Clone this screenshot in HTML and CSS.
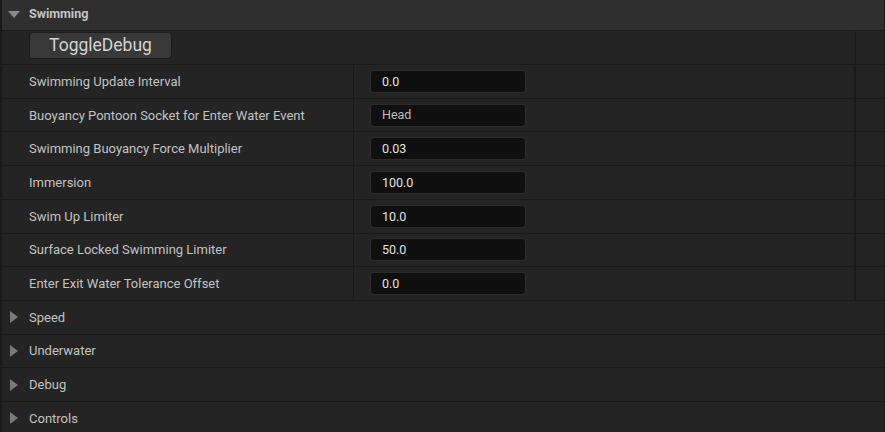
FILE: index.html
```html
<!DOCTYPE html>
<html>
<head>
<meta charset="utf-8">
<link rel="stylesheet" href="styles.css">
</head>
<body>
<div class="panel">
  <div class="cat">
    <svg class="arrow-down" width="12" height="7" viewBox="0 0 12 7"><path d="M0 0H12L6 7Z" fill="#8a8a8a"/></svg>
    <span class="cat-title">Swimming</span>
  </div>
  <div class="toggle-row">
    <div class="toggle-main"><button class="btn">ToggleDebug</button></div>
    <div class="extra"></div>
  </div>
  <div class="prop"><div class="name">Swimming Update Interval</div><div class="value"><div class="input">0.0</div></div><div class="extra"></div></div>
  <div class="prop"><div class="name">Buoyancy Pontoon Socket for Enter Water Event</div><div class="value"><div class="input muted">Head</div></div><div class="extra"></div></div>
  <div class="prop"><div class="name">Swimming Buoyancy Force Multiplier</div><div class="value"><div class="input">0.03</div></div><div class="extra"></div></div>
  <div class="prop"><div class="name">Immersion</div><div class="value"><div class="input">100.0</div></div><div class="extra"></div></div>
  <div class="prop"><div class="name">Swim Up Limiter</div><div class="value"><div class="input">10.0</div></div><div class="extra"></div></div>
  <div class="prop"><div class="name">Surface Locked Swimming Limiter</div><div class="value"><div class="input">50.0</div></div><div class="extra"></div></div>
  <div class="prop"><div class="name">Enter Exit Water Tolerance Offset</div><div class="value"><div class="input">0.0</div></div><div class="extra"></div></div>
  <div class="sub"><svg class="arrow-right" width="8" height="12" viewBox="0 0 8 12"><path d="M0 0L8 6L0 12Z" fill="#7a7a7a"/></svg><span>Speed</span></div>
  <div class="sub"><svg class="arrow-right" width="8" height="12" viewBox="0 0 8 12"><path d="M0 0L8 6L0 12Z" fill="#7a7a7a"/></svg><span>Underwater</span></div>
  <div class="sub"><svg class="arrow-right" width="8" height="12" viewBox="0 0 8 12"><path d="M0 0L8 6L0 12Z" fill="#7a7a7a"/></svg><span>Debug</span></div>
  <div class="sub"><svg class="arrow-right" width="8" height="12" viewBox="0 0 8 12"><path d="M0 0L8 6L0 12Z" fill="#7a7a7a"/></svg><span>Controls</span></div>
</div>
</body>
</html>
```
FILE: styles.css
```css
html, body {
  margin: 0;
  padding: 0;
  background: #1a1a1a;
  height: 432px;
  overflow: hidden;
  font-family: Roboto, "Liberation Sans", sans-serif;
  color: #c0c0c0;
}
.panel {
  margin: 0 1px 0 2px;
  display: flex;
  flex-direction: column;
}
.cat {
  height: 31px;
  box-sizing: border-box;
  padding-bottom: 3px;
  background: #2f2f2f;
  border-bottom: 1px solid #1a1a1a;
  display: flex;
  align-items: center;
  padding-left: 6px;
}
.arrow-down { margin-top: 1px; }
.cat-title {
  margin-left: 9px;
  font-weight: bold;
  font-size: 12.5px;
  color: #c4c4c4;
}
.toggle-row {
  height: 33px;
  border-bottom: 1px solid #1a1a1a;
  display: flex;
  background: #242424;
}
.toggle-main {
  width: 854px;
  border-right: 1px solid #1a1a1a;
  display: flex;
  align-items: flex-start;
  padding-left: 27px;
  box-sizing: border-box;
}
.btn {
  margin-top: 1px;
  width: 143px;
  height: 27px;
  background: #383838;
  border: 1px solid #1c1c1c;
  border-radius: 4px;
  color: #d4d4d4;
  font-family: Roboto, "Liberation Sans", sans-serif;
  font-size: 17.5px;
  padding: 0 0 1px 0;
}
.extra {
  flex: 1;
  background: #242424;
}
.prop {
  height: 32.71px;
  border-bottom: 1px solid #1a1a1a;
  display: flex;
  background: #242424;
}
.name {
  width: 324px;
  border-right: 1px solid #1a1a1a;
  display: flex;
  align-items: center;
  padding-left: 27px;
  font-size: 13px;
  color: #c2c2c2;
}
.value {
  width: 502px;
  border-right: 2px solid #1a1a1a;
  display: flex;
  align-items: center;
  padding-left: 16px;
  box-sizing: border-box;
}
.input {
  width: 156px;
  height: 23px;
  box-sizing: border-box;
  background: #0f0f0f;
  border: 1px solid #2c2c2c;
  border-radius: 4px;
  font-size: 12.5px;
  color: #e2e2e2;
  display: flex;
  align-items: center;
  padding-left: 11px;
}
.input.muted {
  color: #bdbdbd;
  align-items: flex-start;
  padding-top: 2px;
}
.sub {
  height: 32.71px;
  border-bottom: 1px solid #1a1a1a;
  background: #242424;
  display: flex;
  align-items: center;
  padding-left: 8px;
  font-size: 13px;
  color: #c2c2c2;
}
.sub span { margin-left: 11px; }
```
